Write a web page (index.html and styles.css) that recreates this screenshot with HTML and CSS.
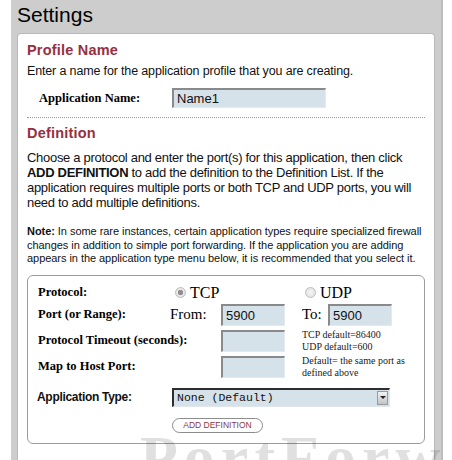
FILE: index.html
```html
<!DOCTYPE html>
<html lang="en">
<head>
    <meta charset="UTF-8">
    <meta name="viewport" content="width=device-width, initial-scale=1.0">
    <title>Settings</title>
    <link rel="stylesheet" href="styles.css">
</head>
<body>
    <div class="page">
        <h1 class="title">Settings</h1>

        <div class="card">
            <h2 class="section">Profile Name</h2>
            <p class="intro">Enter a name for the application profile that you are creating.</p>

            <div class="name-row">
                <label class="flabel name-label">Application Name:</label>
                <input class="field name-field" type="text" value="Name1">
            </div>

            <div class="dots"></div>

            <h2 class="section">Definition</h2>
            <p class="desc">Choose a protocol and enter the port(s) for this application, then click <b>ADD DEFINITION</b> to add the definition to the Definition List. If the application requires multiple ports or both TCP and UDP ports, you will need to add multiple definitions.</p>

            <p class="note"><b>Note:</b> In some rare instances, certain application types require specialized firewall changes in addition to simple port forwarding. If the application you are adding appears in the application type menu below, it is recommended that you select it.</p>

            <div class="form-box">
                <div class="row row-protocol">
                    <span class="flabel w-proto">Protocol:</span>
                    <span class="choice w-tcp"><span class="radio checked"></span>TCP</span>
                    <span class="choice"><span class="radio"></span>UDP</span>
                </div>

                <div class="row row-port">
                    <span class="flabel w-port">Port (or Range):</span>
                    <span class="word w-from">From:</span>
                    <input class="field port" type="text" value="5900">
                    <span class="word w-to">To:</span>
                    <input class="field port" type="text" value="5900">
                </div>

                <div class="row">
                    <span class="flabel w-long">Protocol Timeout (seconds):</span>
                    <input class="field port" type="text" value="">
                    <span class="hint">TCP default=86400<br>UDP default=600</span>
                </div>

                <div class="row">
                    <span class="flabel w-long">Map to Host Port:</span>
                    <input class="field port" type="text" value="">
                    <span class="hint">Default= the same port as<br>defined above</span>
                </div>

                <div class="row row-type">
                    <span class="type-label">Application Type:</span>
                    <div class="select">
                        <span class="select-text">None (Default)</span>
                        <span class="select-arrow"></span>
                    </div>
                </div>

                <div class="row row-button">
                    <button class="add-btn" type="button">ADD DEFINITION</button>
                </div>
            </div>
        </div>

        <div class="watermark">PortForward</div>
    </div>
</body>
</html>
```

FILE: styles.css
```css
body {
    margin: 0;
    background-color: #ffffff;
    font-family: "Liberation Sans", Arial, sans-serif;
    color: #111111;
}

.page {
    position: relative;
    margin-left: 11px;
    width: 418px;
    height: 460px;
    padding: 0 6px;
    background-color: #cdcdcd;
    border-right: 2px solid #bdbdbd;
    overflow: hidden;
}

.title {
    margin: 0;
    height: 33px;
    font-size: 21px;
    font-weight: normal;
    line-height: 30px;
    color: #000000;
}

.card {
    height: 427px;
    box-sizing: border-box;
    background: #ffffff;
    border: 1px solid #b8b8b8;
    border-bottom: none;
    border-radius: 4px 4px 0 0;
    padding: 8px 9px 0;
}

.section {
    margin: 0;
    font-size: 14.5px;
    line-height: 17px;
    font-weight: bold;
    letter-spacing: 0.2px;
    color: #963040;
}

.intro {
    margin: 5px 0 0;
    font-size: 12.5px;
    line-height: 15px;
    letter-spacing: -0.15px;
}

.name-row {
    display: flex;
    align-items: center;
    margin-top: 9px;
    height: 20px;
}

.flabel {
    font-family: "Liberation Serif", "Times New Roman", serif;
    font-weight: bold;
    font-size: 12.5px;
    color: #000000;
}

.name-label {
    width: 133px;
    margin-left: 12px;
}

.field {
    box-sizing: border-box;
    height: 20px;
    padding: 0 3px;
    background: #d5e2ea;
    border: 1px solid #e3ebf0;
    border-top: 2px solid #8a8a8a;
    border-left: 2px solid #8a8a8a;
    font-family: "Liberation Sans", Arial, sans-serif;
    font-size: 13px;
    color: #111111;
    outline: none;
}

.name-field {
    width: 154px;
}

.dots {
    margin-top: 9px;
    border-top: 1px dotted #9a9a9a;
}

.dots + .section {
    margin-top: 7px;
}

.desc {
    margin: 8px 0 0;
    font-size: 13px;
    line-height: 15px;
    letter-spacing: -0.3px;
}

.note {
    margin: 15px 0 0;
    font-size: 11px;
    line-height: 13.5px;
    letter-spacing: -0.05px;
}

.form-box {
    margin-top: 9px;
    border: 1px solid #9c9c9c;
    border-radius: 6px;
    padding: 6px 10px 10px;
}

.row {
    display: flex;
    align-items: center;
    height: 22px;
    margin-top: 4px;
}

.row-protocol,
.row-port {
    margin-top: 0;
}

.w-proto {
    width: 137px;
}

.w-tcp {
    width: 130px;
}

.choice {
    display: flex;
    align-items: center;
    font-family: "Liberation Serif", "Times New Roman", serif;
    font-size: 16px;
    color: #000000;
}

.radio {
    box-sizing: border-box;
    width: 11px;
    height: 11px;
    margin-right: 4px;
    border-radius: 50%;
    border: 1px solid #bdbdbd;
    background: radial-gradient(circle, #f4f4f4 0%, #dedede 100%);
}

.radio.checked {
    background: radial-gradient(circle, #8e8e8e 0 2.5px, #ececec 3px, #d8d8d8 100%);
}

.w-port {
    width: 132px;
}

.word {
    font-family: "Liberation Serif", "Times New Roman", serif;
    font-size: 15px;
    color: #000000;
}

.w-from {
    width: 51px;
}

.w-to {
    width: 26px;
    margin-left: 17px;
}

.port {
    width: 64px;
    height: 22px;
}

.w-long {
    width: 183px;
    white-space: nowrap;
}

.hint {
    margin-left: 17px;
    font-family: "Liberation Serif", "Times New Roman", serif;
    font-size: 10px;
    line-height: 12px;
    color: #222222;
}

.row-type {
    height: 19px;
    margin-top: 10px;
}

.type-label {
    width: 135px;
    margin-left: -1px;
    font-size: 12px;
    font-weight: bold;
    letter-spacing: -0.3px;
}

.select {
    box-sizing: border-box;
    display: flex;
    align-items: center;
    width: 218px;
    height: 19px;
    background: #d5e2ea;
    border: 1px solid #dfe7ec;
    border-top: 2px solid #2e2e2e;
    border-left: 2px solid #2e2e2e;
}

.select-text {
    flex: 1;
    padding-left: 3px;
    font-family: "Liberation Mono", "Courier New", monospace;
    font-size: 11.5px;
    color: #111111;
}

.select-arrow {
    position: relative;
    width: 11px;
    height: 14px;
    margin-right: 1px;
    background: linear-gradient(#f2f2f2, #c4c4c4);
    border: 1px solid #9a9a9a;
    box-sizing: border-box;
}

.select-arrow::after {
    content: "";
    position: absolute;
    left: 2px;
    top: 4px;
    border-left: 3px solid transparent;
    border-right: 3px solid transparent;
    border-top: 3px solid #222222;
}

.row-button {
    height: 15px;
    margin-top: 11px;
    padding-left: 134px;
}

.add-btn {
    height: 15px;
    width: 91px;
    padding: 0;
    background: #ffffff;
    border: 1px solid #8c8c8c;
    border-radius: 8px;
    font-family: "Liberation Sans", Arial, sans-serif;
    font-size: 8.5px;
    color: #8a3a44;
}

.watermark {
    position: absolute;
    left: 129px;
    top: 422px;
    font-family: "Liberation Serif", "Times New Roman", serif;
    font-weight: bold;
    font-size: 62px;
    letter-spacing: 6px;
    color: rgba(0, 0, 0, 0.12);
    pointer-events: none;
    white-space: nowrap;
}
```
